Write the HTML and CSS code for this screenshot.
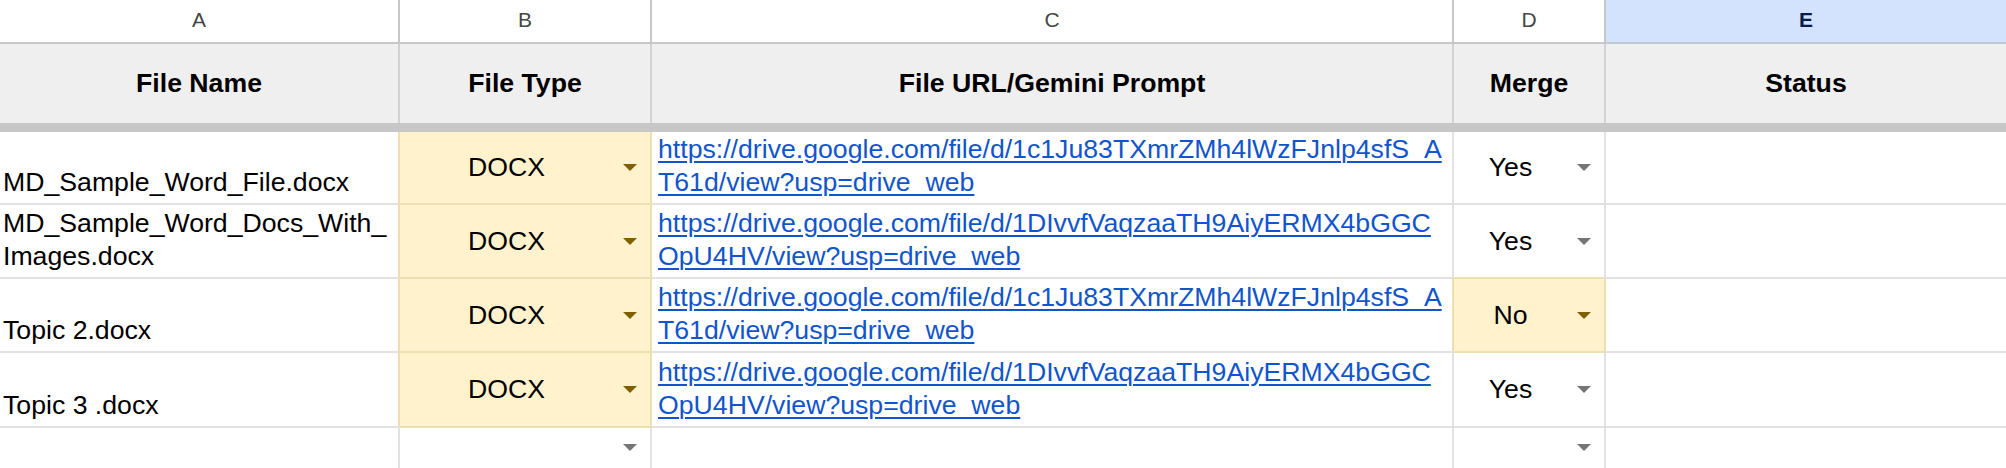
FILE: index.html
```html
<!DOCTYPE html>
<html>
<head>
<meta charset="utf-8">
<title>Sheet</title>
<link rel="stylesheet" href="styles.css">
</head>
<body>
<div class="sheet">
  <div class="row colheads">
    <div class="cell">A</div>
    <div class="cell">B</div>
    <div class="cell">C</div>
    <div class="cell">D</div>
    <div class="cell sel">E</div>
  </div>
  <div class="row head">
    <div class="cell">File Name</div>
    <div class="cell">File Type</div>
    <div class="cell">File URL/Gemini Prompt</div>
    <div class="cell">Merge</div>
    <div class="cell">Status</div>
  </div>
  <div class="freeze"></div>

  <div class="row r-first">
    <div class="cell txt name">MD_Sample_Word_File.docx</div>
    <div class="cell dd yellow"><span class="val">DOCX</span><svg viewBox="0 0 14 7"><path d="M0 0H14L7 7Z"/></svg></div>
    <div class="cell txt url"><a href="#">https://drive.google.com/file/d/1c1Ju83TXmrZMh4lWzFJnlp4sfS_A<br>T61d/view?usp=drive_web</a></div>
    <div class="cell dd"><span class="val">Yes</span><svg viewBox="0 0 14 7"><path d="M0 0H14L7 7Z"/></svg></div>
    <div class="cell"></div>
  </div>

  <div class="row r-mid">
    <div class="cell txt name">MD_Sample_Word_Docs_With_<br>Images.docx</div>
    <div class="cell dd yellow"><span class="val">DOCX</span><svg viewBox="0 0 14 7"><path d="M0 0H14L7 7Z"/></svg></div>
    <div class="cell txt url"><a href="#">https://drive.google.com/file/d/1DIvvfVaqzaaTH9AiyERMX4bGGC<br>OpU4HV/view?usp=drive_web</a></div>
    <div class="cell dd"><span class="val">Yes</span><svg viewBox="0 0 14 7"><path d="M0 0H14L7 7Z"/></svg></div>
    <div class="cell"></div>
  </div>

  <div class="row r-mid">
    <div class="cell txt name">Topic 2.docx</div>
    <div class="cell dd yellow"><span class="val">DOCX</span><svg viewBox="0 0 14 7"><path d="M0 0H14L7 7Z"/></svg></div>
    <div class="cell txt url"><a href="#">https://drive.google.com/file/d/1c1Ju83TXmrZMh4lWzFJnlp4sfS_A<br>T61d/view?usp=drive_web</a></div>
    <div class="cell dd yellow"><span class="val">No</span><svg viewBox="0 0 14 7"><path d="M0 0H14L7 7Z"/></svg></div>
    <div class="cell"></div>
  </div>

  <div class="row r-mid">
    <div class="cell txt name">Topic 3 .docx</div>
    <div class="cell dd yellow"><span class="val">DOCX</span><svg viewBox="0 0 14 7"><path d="M0 0H14L7 7Z"/></svg></div>
    <div class="cell txt url"><a href="#">https://drive.google.com/file/d/1DIvvfVaqzaaTH9AiyERMX4bGGC<br>OpU4HV/view?usp=drive_web</a></div>
    <div class="cell dd"><span class="val">Yes</span><svg viewBox="0 0 14 7"><path d="M0 0H14L7 7Z"/></svg></div>
    <div class="cell"></div>
  </div>

  <div class="row r-last">
    <div class="cell"></div>
    <div class="cell dd"><span class="val"></span><svg viewBox="0 0 14 7"><path d="M0 0H14L7 7Z"/></svg></div>
    <div class="cell"></div>
    <div class="cell dd"><span class="val"></span><svg viewBox="0 0 14 7"><path d="M0 0H14L7 7Z"/></svg></div>
    <div class="cell"></div>
  </div>
</div>
</body>
</html>
```

FILE: styles.css
```css
html, body {
  margin: 0;
  padding: 0;
  background: #ffffff;
}

body {
  font-family: "Liberation Sans", Arial, sans-serif;
  font-size: 26.67px;
  color: #000000;
  overflow: hidden;
}

.sheet {
  width: 2006px;
}

.row {
  display: grid;
  grid-template-columns: 400px 252px 802px 152px 1fr;
}

.cell {
  box-sizing: border-box;
  display: flex;
  min-width: 0;
  border-right: 2px solid #e2e2e2;
  border-bottom: 2px solid #e2e2e2;
  white-space: nowrap;
}

.cell:last-child {
  border-right: 0;
}

/* column letters */
.colheads .cell {
  height: 44px;
  border-color: #c7c7c7;
  justify-content: center;
  align-items: center;
  font-size: 21px;
  color: #444746;
  padding-bottom: 3px;
}

.colheads .sel {
  background: #d3e3fd;
  color: #041e49;
  font-weight: bold;
  border-bottom-color: #c2c8d0;
}

/* header row */
.head .cell {
  height: 79px;
  border-bottom: 0;
  border-right-color: #d2d2d2;
  background: #efefef;
  justify-content: center;
  align-items: center;
  font-weight: bold;
}

.freeze {
  height: 9px;
  background: #c7c7c7;
}

.r-first .cell { height: 73px; }
.r-mid .cell { height: 74.2px; }
.r-last .cell { height: 42px; }

/* bottom-aligned text cells */
.txt {
  align-items: flex-end;
  line-height: 33px;
  padding: 0 4px 4px 4px;
}

.name {
  padding-left: 3px;
}

.url {
  padding-left: 6px;
}

.url a {
  color: #1155cc;
  text-decoration: underline;
  text-decoration-thickness: 2px;
  text-underline-offset: 3px;
}

/* dropdown chips */
.dd {
  align-items: center;
}

.dd .val {
  flex: 1;
  text-align: center;
  line-height: 33px;
}

.dd svg {
  flex: none;
  width: 14px;
  height: 7px;
  margin: 0 13px 0 10px;
  fill: #757575;
}

.yellow {
  background: #fff2cc;
  border-color: #eddfb2;
  box-shadow: -2px -2px 0 0 #eddfb2;
}

.r-first .yellow {
  box-shadow: -2px 0 0 0 #eddfb2;
}

.yellow svg {
  fill: #7f6000;
}
```
